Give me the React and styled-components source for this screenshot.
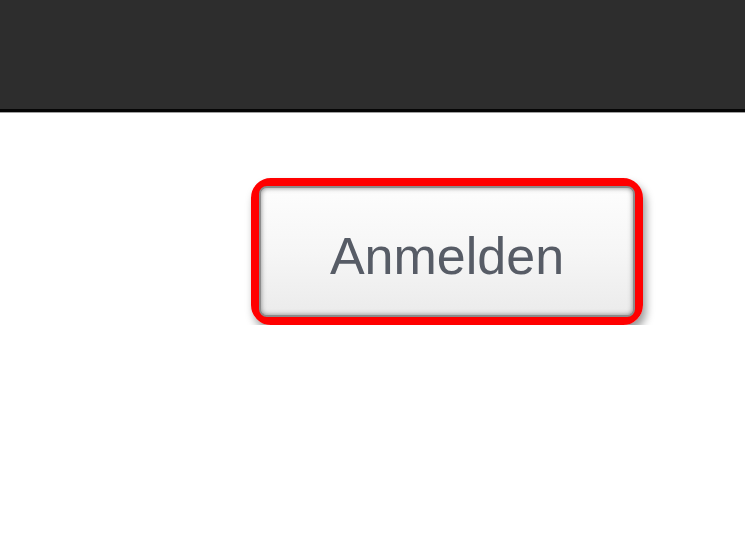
import React from 'react'
import styled, { createGlobalStyle } from 'styled-components'

const Global = createGlobalStyle`
  html, body {
    margin: 0;
    padding: 0;
    background: #fff;
    font-family: "Liberation Sans", Arial, sans-serif;
  }
`

const TopBar = styled.div`
  height: 109px;
  background: #2d2d2d;
  border-bottom: 3px solid #050505;
  box-shadow: 0 1px 0 #a0a0a0;
`

const Content = styled.div`
  padding: 66px 0 0 251px;
`

const Highlight = styled.div`
  width: 376px;
  height: 131px;
  border: 8px solid #ff0000;
  border-radius: 20px;
  box-shadow: 3px 6px 9px rgba(0, 0, 0, 0.4);
  display: flex;
`

const Button = styled.button`
  flex: 1;
  margin: 0;
  border: 2px solid #8c8c8c;
  border-radius: 8px;
  box-shadow: inset 0 0 5px rgba(90, 90, 90, 0.7);
  background: linear-gradient(#fdfdfd, #f6f6f6 50%, #ebebeb);
  color: #575c66;
  font-family: "Liberation Sans", Arial, sans-serif;
  font-size: 52px;
  padding: 8px 0 0 0;
  cursor: pointer;
`

export default function App() {
  return (
    <>
      <Global />
      <TopBar />
      <Content>
        <Highlight>
          <Button>Anmelden</Button>
        </Highlight>
      </Content>
    </>
  )
}
